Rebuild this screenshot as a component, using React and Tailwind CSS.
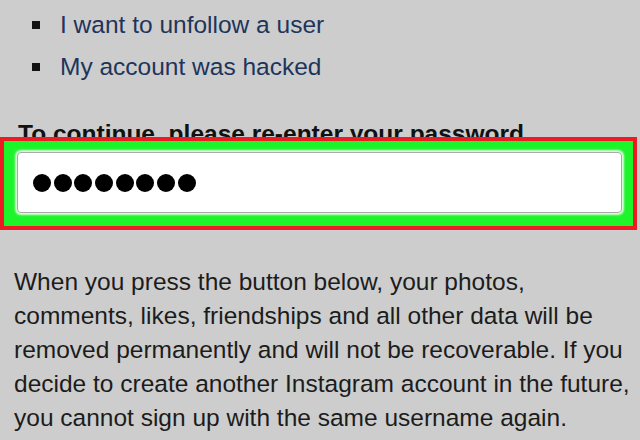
export default function App() {
  const reasons = ['I want to unfollow a user', 'My account was hacked'];

  return (
    <div className="w-[640px] h-[440px] overflow-hidden bg-[#cdcdcd]" style={{ fontFamily: '"Liberation Sans", Arial, sans-serif' }}>
      <ul className="pt-[4px] pl-[32px]">
        {reasons.map((r) => (
          <li key={r} className="flex items-center h-[42px] text-[24.5px] text-[#1d355b]">
            <span className="w-[8px] h-[8px] bg-[#111] mr-[20px]" />
            {r}
          </li>
        ))}
      </ul>

      <p className="mt-[32px] pl-[18px] text-[24.5px] font-bold text-[#111] leading-[28px]">
        To continue, please re-enter your password
      </p>

      <div className="relative mt-[-11px] w-[637px] h-[93px] border-[4px] border-[#ed1c24] bg-[#1ef42a] pl-[13px] pr-[11px] pt-[11px] pb-[13px]">
        <div className="h-full bg-white rounded-[4px] border border-[#a9a9a9] shadow-[0_0_2px_2px_rgba(255,255,255,0.85)] flex items-center pl-[15px] gap-[2.7px]">
          {[0, 1, 2, 3, 4, 5, 6, 7].map((i) => (
            <span key={i} className="w-[18px] h-[18px] rounded-full bg-black" />
          ))}
        </div>
      </div>

      <p className="mt-[35px] pl-[14px] w-[680px] text-[24.5px] leading-[34px] text-[#1c1c1c]">
        When you press the button below, your photos,<br />
        comments, likes, friendships and all other data will be<br />
        removed permanently and will not be recoverable. If you<br />
        decide to create another Instagram account in the future,<br />
        you cannot sign up with the same username again.
      </p>
    </div>
  );
}
